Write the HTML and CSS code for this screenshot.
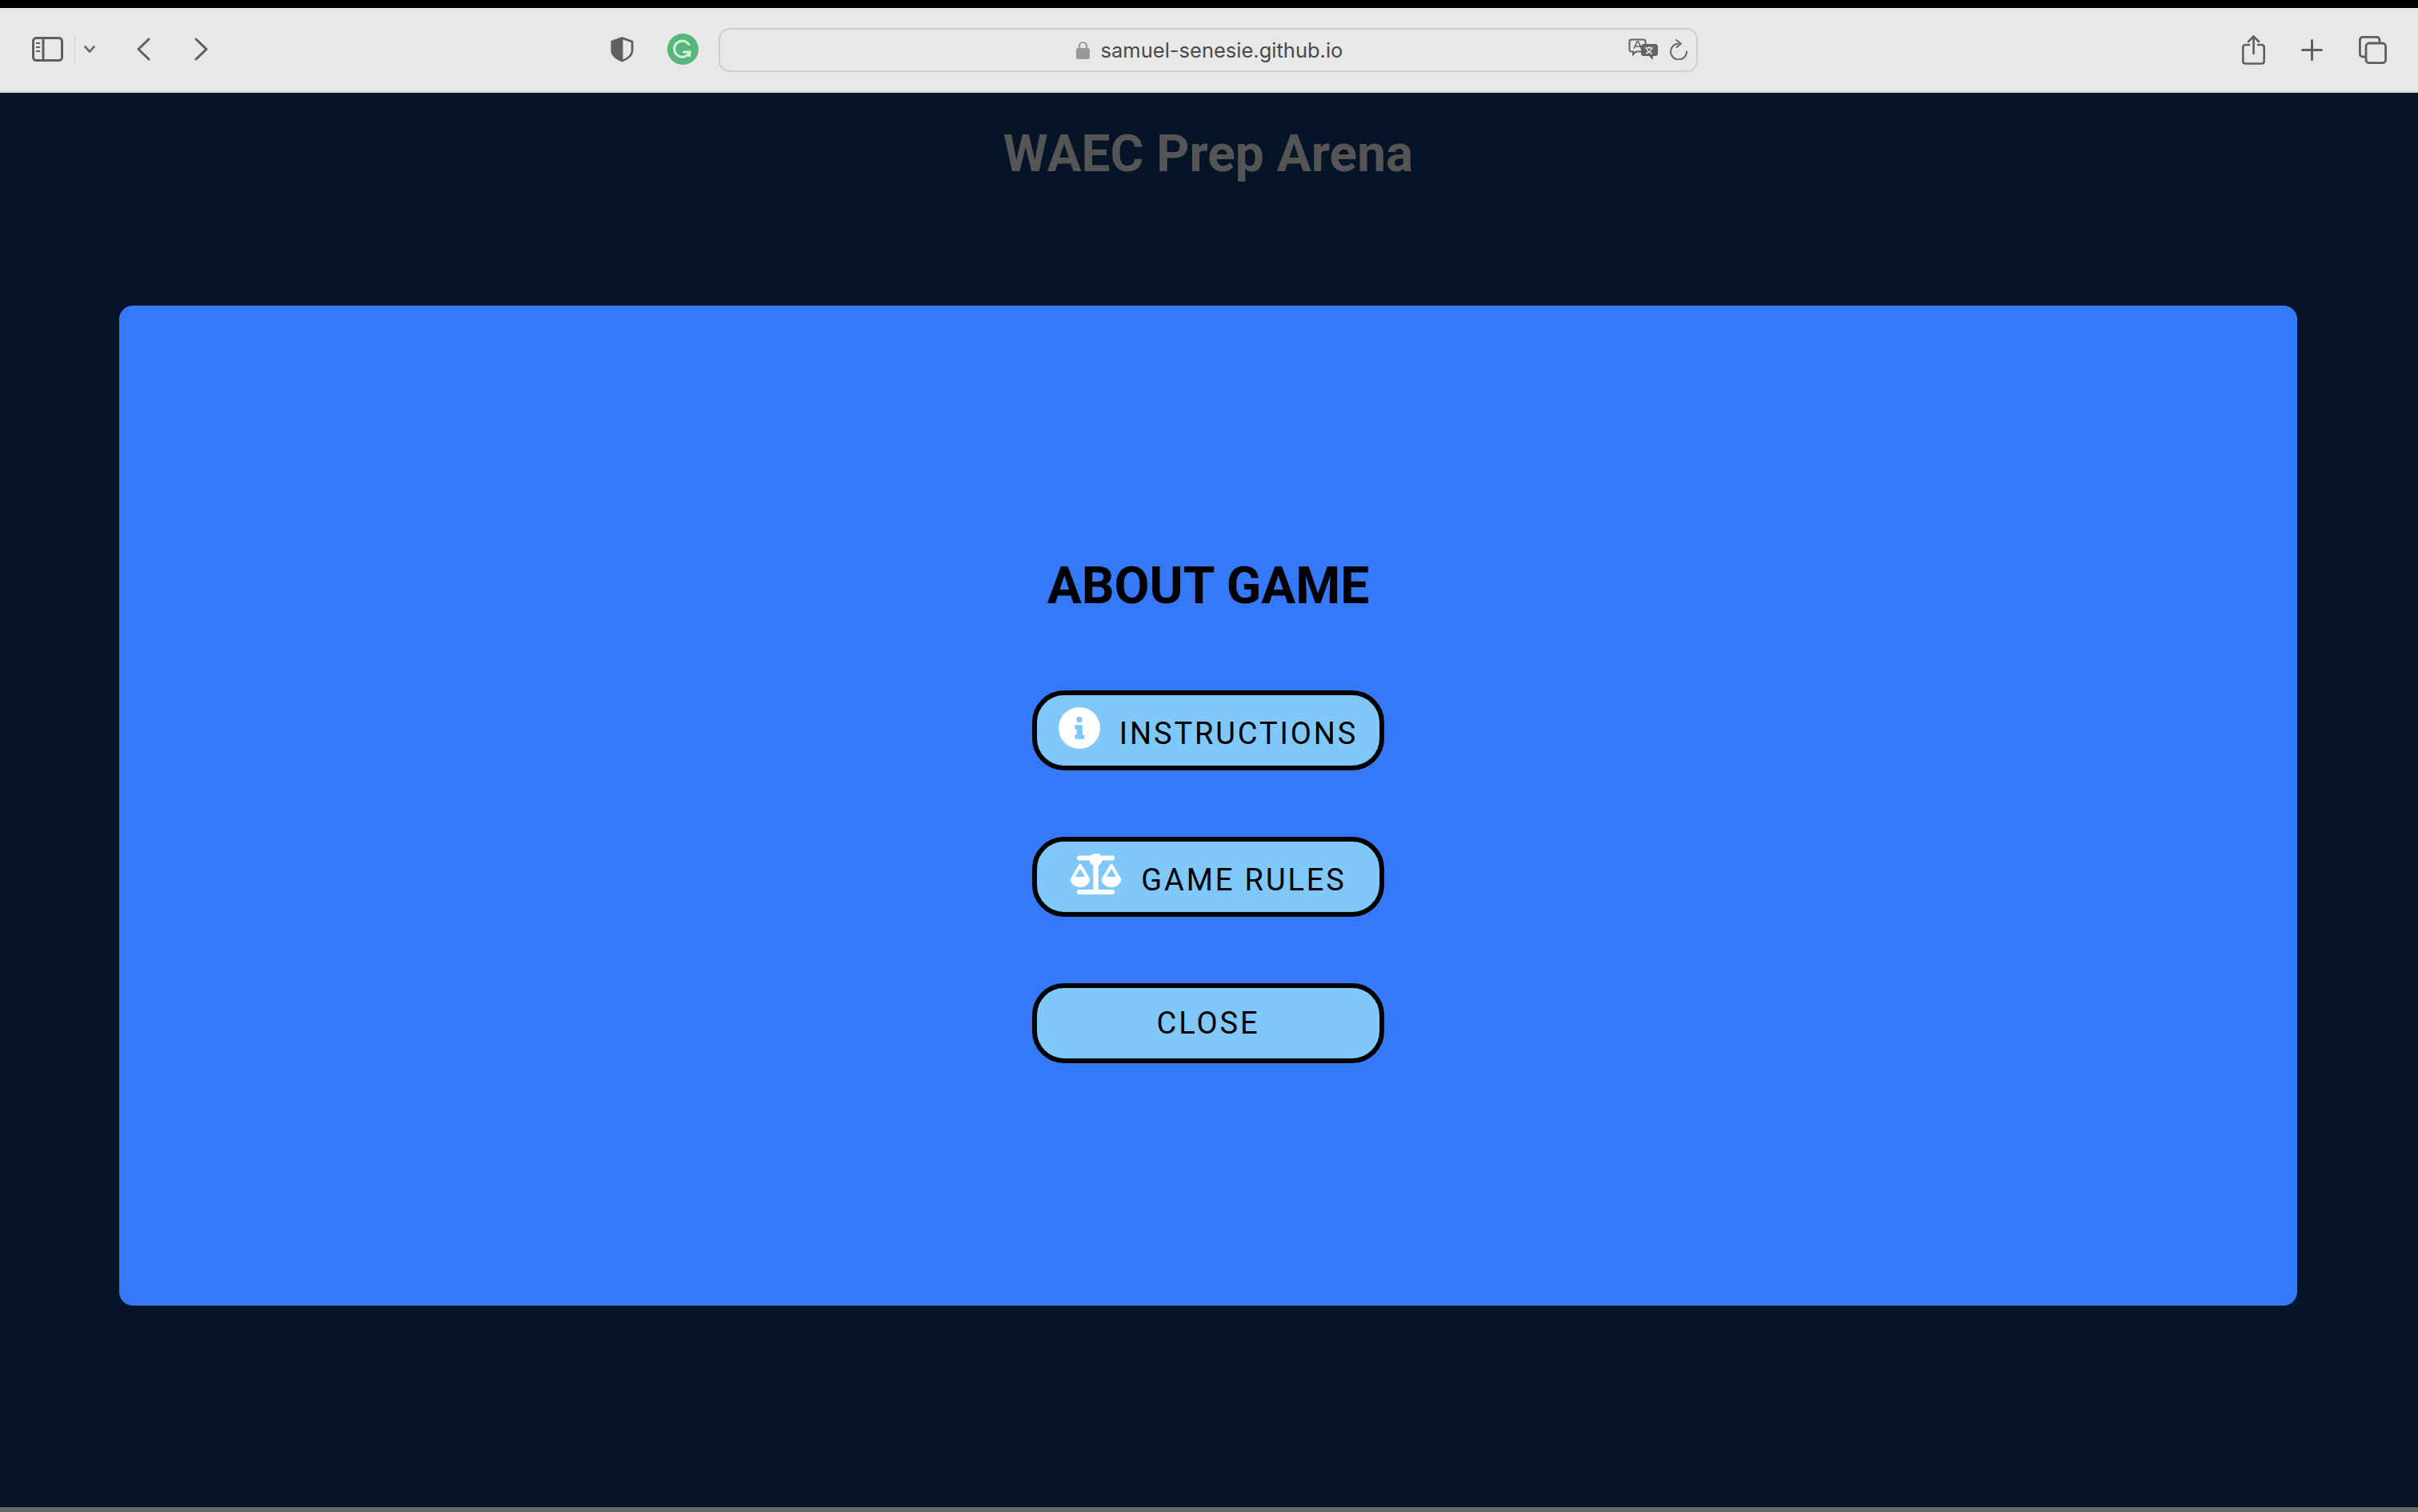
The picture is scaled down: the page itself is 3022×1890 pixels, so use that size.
FILE: index.html
```html
<!DOCTYPE html>
<html lang="en">
<head>
  <meta charset="UTF-8" />
  <meta name="viewport" content="width=device-width, initial-scale=1.0" />
  <title>WAEC Prep Arena</title>
  <link rel="stylesheet" href="styles.css">
</head>
<body>
  <header class="toolbar">
    <svg class="tb-sidebar" width="39" height="31" viewBox="0 0 39 31" fill="none" stroke="#5f5f5f" stroke-width="3">
      <rect x="1.5" y="1.5" width="36" height="28" rx="4" />
      <path d="M14 2v27" />
      <path d="M5 8h5M5 13h5M5 18h5" stroke-width="2" />
    </svg>
    <span class="tb-divider"></span>
    <svg class="tb-chevron" width="14" height="9" viewBox="0 0 14 9" fill="none" stroke="#6a6a6a" stroke-width="2.6" stroke-linecap="round" stroke-linejoin="round">
      <path d="M1.5 1.5 7 7.5l5.5-6" />
    </svg>
    <svg class="tb-back" width="17" height="29" viewBox="0 0 17 29" fill="none" stroke="#5f5f5f" stroke-width="3" stroke-linecap="round" stroke-linejoin="round">
      <path d="M15 2 2 14.5 15 27" />
    </svg>
    <svg class="tb-forward" width="17" height="29" viewBox="0 0 17 29" fill="none" stroke="#5f5f5f" stroke-width="3" stroke-linecap="round" stroke-linejoin="round">
      <path d="M2 2l13 12.5L2 27" />
    </svg>
    <svg class="tb-shield" width="29" height="33" viewBox="0 0 29 33">
      <path d="M14.5 1 27 5.5c1 .4 1.5 1 1.500 2V18c0 6-5 11-14 14.500C5.500 29 .5 24 .5 18V7.500c0-1 .5-1.600 1.500-2z" fill="#5f5f5f" />
      <path d="M15.500 4.500 25.800 8v10c0 4.500-3.500 8.500-10.300 11.500z" fill="#e8e8e8" />
    </svg>
    <span class="tb-grammarly">
      <svg width="39" height="39" viewBox="0 0 39 39" fill="none" stroke="#d6efdf" stroke-width="3" stroke-linecap="round">
        <path d="M27 13.500a10 10 0 1 0 1 9.500h-7.500" />
        <path d="M24 27l4 1v-5" stroke-width="2.500" />
      </svg>
    </span>
    <div class="url-bar">
      <span></span>
      <div class="url-address">
        <svg width="17" height="23" viewBox="0 0 17 23">
          <path d="M4 10V6.500a4.500 4.500 0 0 1 9 0V10" fill="none" stroke="#9a9a9a" stroke-width="2.200" />
          <rect y="9" width="17" height="14" rx="2.500" fill="#9a9a9a" />
        </svg>
        <span class="url-text">samuel-senesie.github.io</span>
      </div>
      <div class="url-actions">
        <svg width="37" height="28" viewBox="0 0 37 28">
          <path d="M4 1.500h15c1.500 0 2.500 1 2.500 2.500v10c0 1.500-1 2.500-2.500 2.500H9.500L6 20v-3.500H4c-1.500 0-2.500-1-2.500-2.500V4c0-1.500 1-2.500 2.500-2.500z" fill="#e8e8e8" stroke="#636363" stroke-width="2" />
          <path d="M7 13l4-9h1.500l4 9M8.500 10h6.500" fill="none" stroke="#636363" stroke-width="1.600" />
          <path d="M19 7h15c1.500 0 3 1 3 3v9c0 2-1.500 3-3 3h-3l-.5 5-4.500-5h-7c-1.500 0-3-1-3-3v-9c0-2 1.500-3 3-3z" fill="#636363" />
          <path d="M21 12h10M26 10v2M23 13c1 3 4 5 7 6M29 13c-1 3-4 5-7 6" fill="none" stroke="#e8e8e8" stroke-width="1.500" />
        </svg>
        <svg width="22" height="26" viewBox="0 0 22 26" fill="none" stroke="#6a6a6a" stroke-width="2" stroke-linecap="round" stroke-linejoin="round">
          <path d="M11 5.500A10 10 0 1 0 21 15.500" />
          <path d="M8 1l6 4.500-5.500 4.500" />
        </svg>
      </div>
    </div>
    <div class="tb-right">
      <svg width="29" height="37" viewBox="0 0 29 37" fill="none" stroke="#5f5f5f" stroke-width="2.600" stroke-linecap="round" stroke-linejoin="round">
        <path d="M9 12H4.500c-2 0-3.200 1.200-3.200 3.200v17c0 2 1.200 3.300 3.200 3.300h20c2 0 3.200-1.300 3.200-3.300v-17c0-2-1.200-3.200-3.200-3.200H20" />
        <path d="M14.500 23V2M8 8l6.500-6.500L21 8" />
      </svg>
      <svg width="27" height="27" viewBox="0 0 27 27" fill="none" stroke="#5f5f5f" stroke-width="3" stroke-linecap="round">
        <path d="M13.500 1.500v24M1.500 13.500h24" />
      </svg>
      <svg width="35" height="35" viewBox="0 0 35 35" fill="none" stroke="#5f5f5f" stroke-width="2.800">
        <path d="M8 26H5c-2 0-3.600-1.600-3.600-3.600V5C1.400 3 3 1.400 5 1.400h17.500c2 0 3.500 1.600 3.500 3.600v3" />
        <rect x="9" y="9" width="24.600" height="24.600" rx="4" />
      </svg>
    </div>
  </header>

  <main class="page">
    <h1 class="site-title">WAEC Prep Arena</h1>
    <section class="modal">
      <h2 class="modal-title">ABOUT GAME</h2>
      <button class="menu-btn">
        <svg class="btn-icon" width="52" height="52" viewBox="0 0 52 52">
          <circle cx="26" cy="26" r="26" fill="#fff" />
          <circle cx="26" cy="15.500" r="3.800" fill="#7fc8f9" />
          <path d="M21 23h8v12h2.500v4H21v-4h2.500v-8H21z" fill="#7fc8f9" stroke="#7fc8f9" stroke-width="1.500" stroke-linejoin="round" />
        </svg>
        <span class="btn-label">INSTRUCTIONS</span>
      </button>
      <button class="menu-btn">
        <svg class="btn-icon" width="65" height="52" viewBox="0 0 65 52">
          <path d="M12 5.500h41M12 48h41" fill="none" stroke="#fff" stroke-width="6" stroke-linecap="round" />
          <path d="M32.500 6v42" fill="none" stroke="#fff" stroke-width="6.500" />
          <circle cx="32.500" cy="7.500" r="8" fill="#fff" />
          <path d="M13 15 3.500 31h19z" fill="none" stroke="#fff" stroke-width="4" stroke-linejoin="round" />
          <path d="M0.500 31h25a12.500 11 0 0 1-25 0z" fill="#fff" />
          <path d="M52 15 42.500 31h19z" fill="none" stroke="#fff" stroke-width="4" stroke-linejoin="round" />
          <path d="M39.500 31h25a12.500 11 0 0 1-25 0z" fill="#fff" />
        </svg>
        <span class="btn-label">GAME RULES</span>
      </button>
      <button class="menu-btn menu-btn-plain">
        <span class="btn-label">CLOSE</span>
      </button>
    </section>
  </main>
  <div class="bottom-strip"></div>
</body>
</html>
```

FILE: styles.css
```css
body {
  margin: 0;
  height: 100vh;
  display: flex;
  flex-direction: column;
  background: #061427;
  font-family: Roboto, sans-serif;
  overflow: hidden;
}

/* browser chrome */
.toolbar {
  flex: none;
  height: 104px;
  box-sizing: content-box;
  border-top: 10px solid #000;
  border-bottom: 2px solid #d4d4d4;
  background: #e8e8e8;
  display: flex;
  align-items: center;
  padding: 0 39px 0 40px;
}
.toolbar > svg { margin-bottom: 2px; }
.tb-divider {
  width: 1px;
  height: 36px;
  margin-left: 14px;
  background: #d2d2d2;
}
.tb-chevron { margin-left: 11px; }
.tb-back { margin-left: 52px; }
.tb-forward { margin-left: 55px; }
.tb-shield { margin-left: 503px; }
.tb-grammarly {
  width: 39px;
  height: 39px;
  margin-left: 42px;
  margin-bottom: 2px;
  border-radius: 50%;
  background: #56b77b;
}
.tb-grammarly svg { display: block; }
.url-bar {
  width: 1224px;
  height: 55px;
  box-sizing: border-box;
  margin-left: 25px;
  border: 2px solid #cfcfcf;
  border-radius: 14px;
  display: grid;
  grid-template-columns: 1fr auto 1fr;
  align-items: center;
}
.url-address {
  display: flex;
  align-items: center;
  gap: 14px;
  padding-left: 3px;
}
.url-text {
  font-family: Inter, sans-serif;
  font-size: 25.5px;
  color: #4a4a4a;
}
.url-actions {
  display: flex;
  align-items: center;
  justify-content: flex-end;
  gap: 15px;
  padding-right: 11px;
}
.tb-right {
  margin-left: auto;
  display: flex;
  align-items: center;
  gap: 45px;
}

/* page */
.page {
  flex: 1;
  display: flex;
  flex-direction: column;
  padding: 0 151px 0 149px;
}
.site-title {
  margin: 0;
  height: 266px;
  padding-top: 39px;
  box-sizing: border-box;
  font-size: 64px;
  font-weight: 700;
  line-height: 75px;
  text-align: center;
  color: #555;
}
.modal {
  height: 1250px;
  border-radius: 17px;
  background: #3579f8;
  display: flex;
  flex-direction: column;
  align-items: center;
}
.modal-title {
  margin: 0 0 92px;
  padding-top: 313px;
  font-size: 64px;
  font-weight: 700;
  line-height: 76px;
  color: #000;
}
.menu-btn {
  width: 440px;
  height: 100px;
  margin-bottom: 83px;
  box-sizing: border-box;
  border: 6px solid #000;
  border-radius: 40px;
  background: #7fc8f9;
  color: #000;
  font-family: Roboto, sans-serif;
  font-size: 38px;
  letter-spacing: 2.9px;
  display: flex;
  align-items: center;
  justify-content: center;
  gap: 24px;
  padding: 0;
}
.btn-icon { margin-bottom: 6px; }
.btn-label { margin-top: 8px; }
.menu-btn-plain .btn-label { margin-top: 0; }

.bottom-strip {
  flex: none;
  height: 6px;
  background: #666;
}
```
